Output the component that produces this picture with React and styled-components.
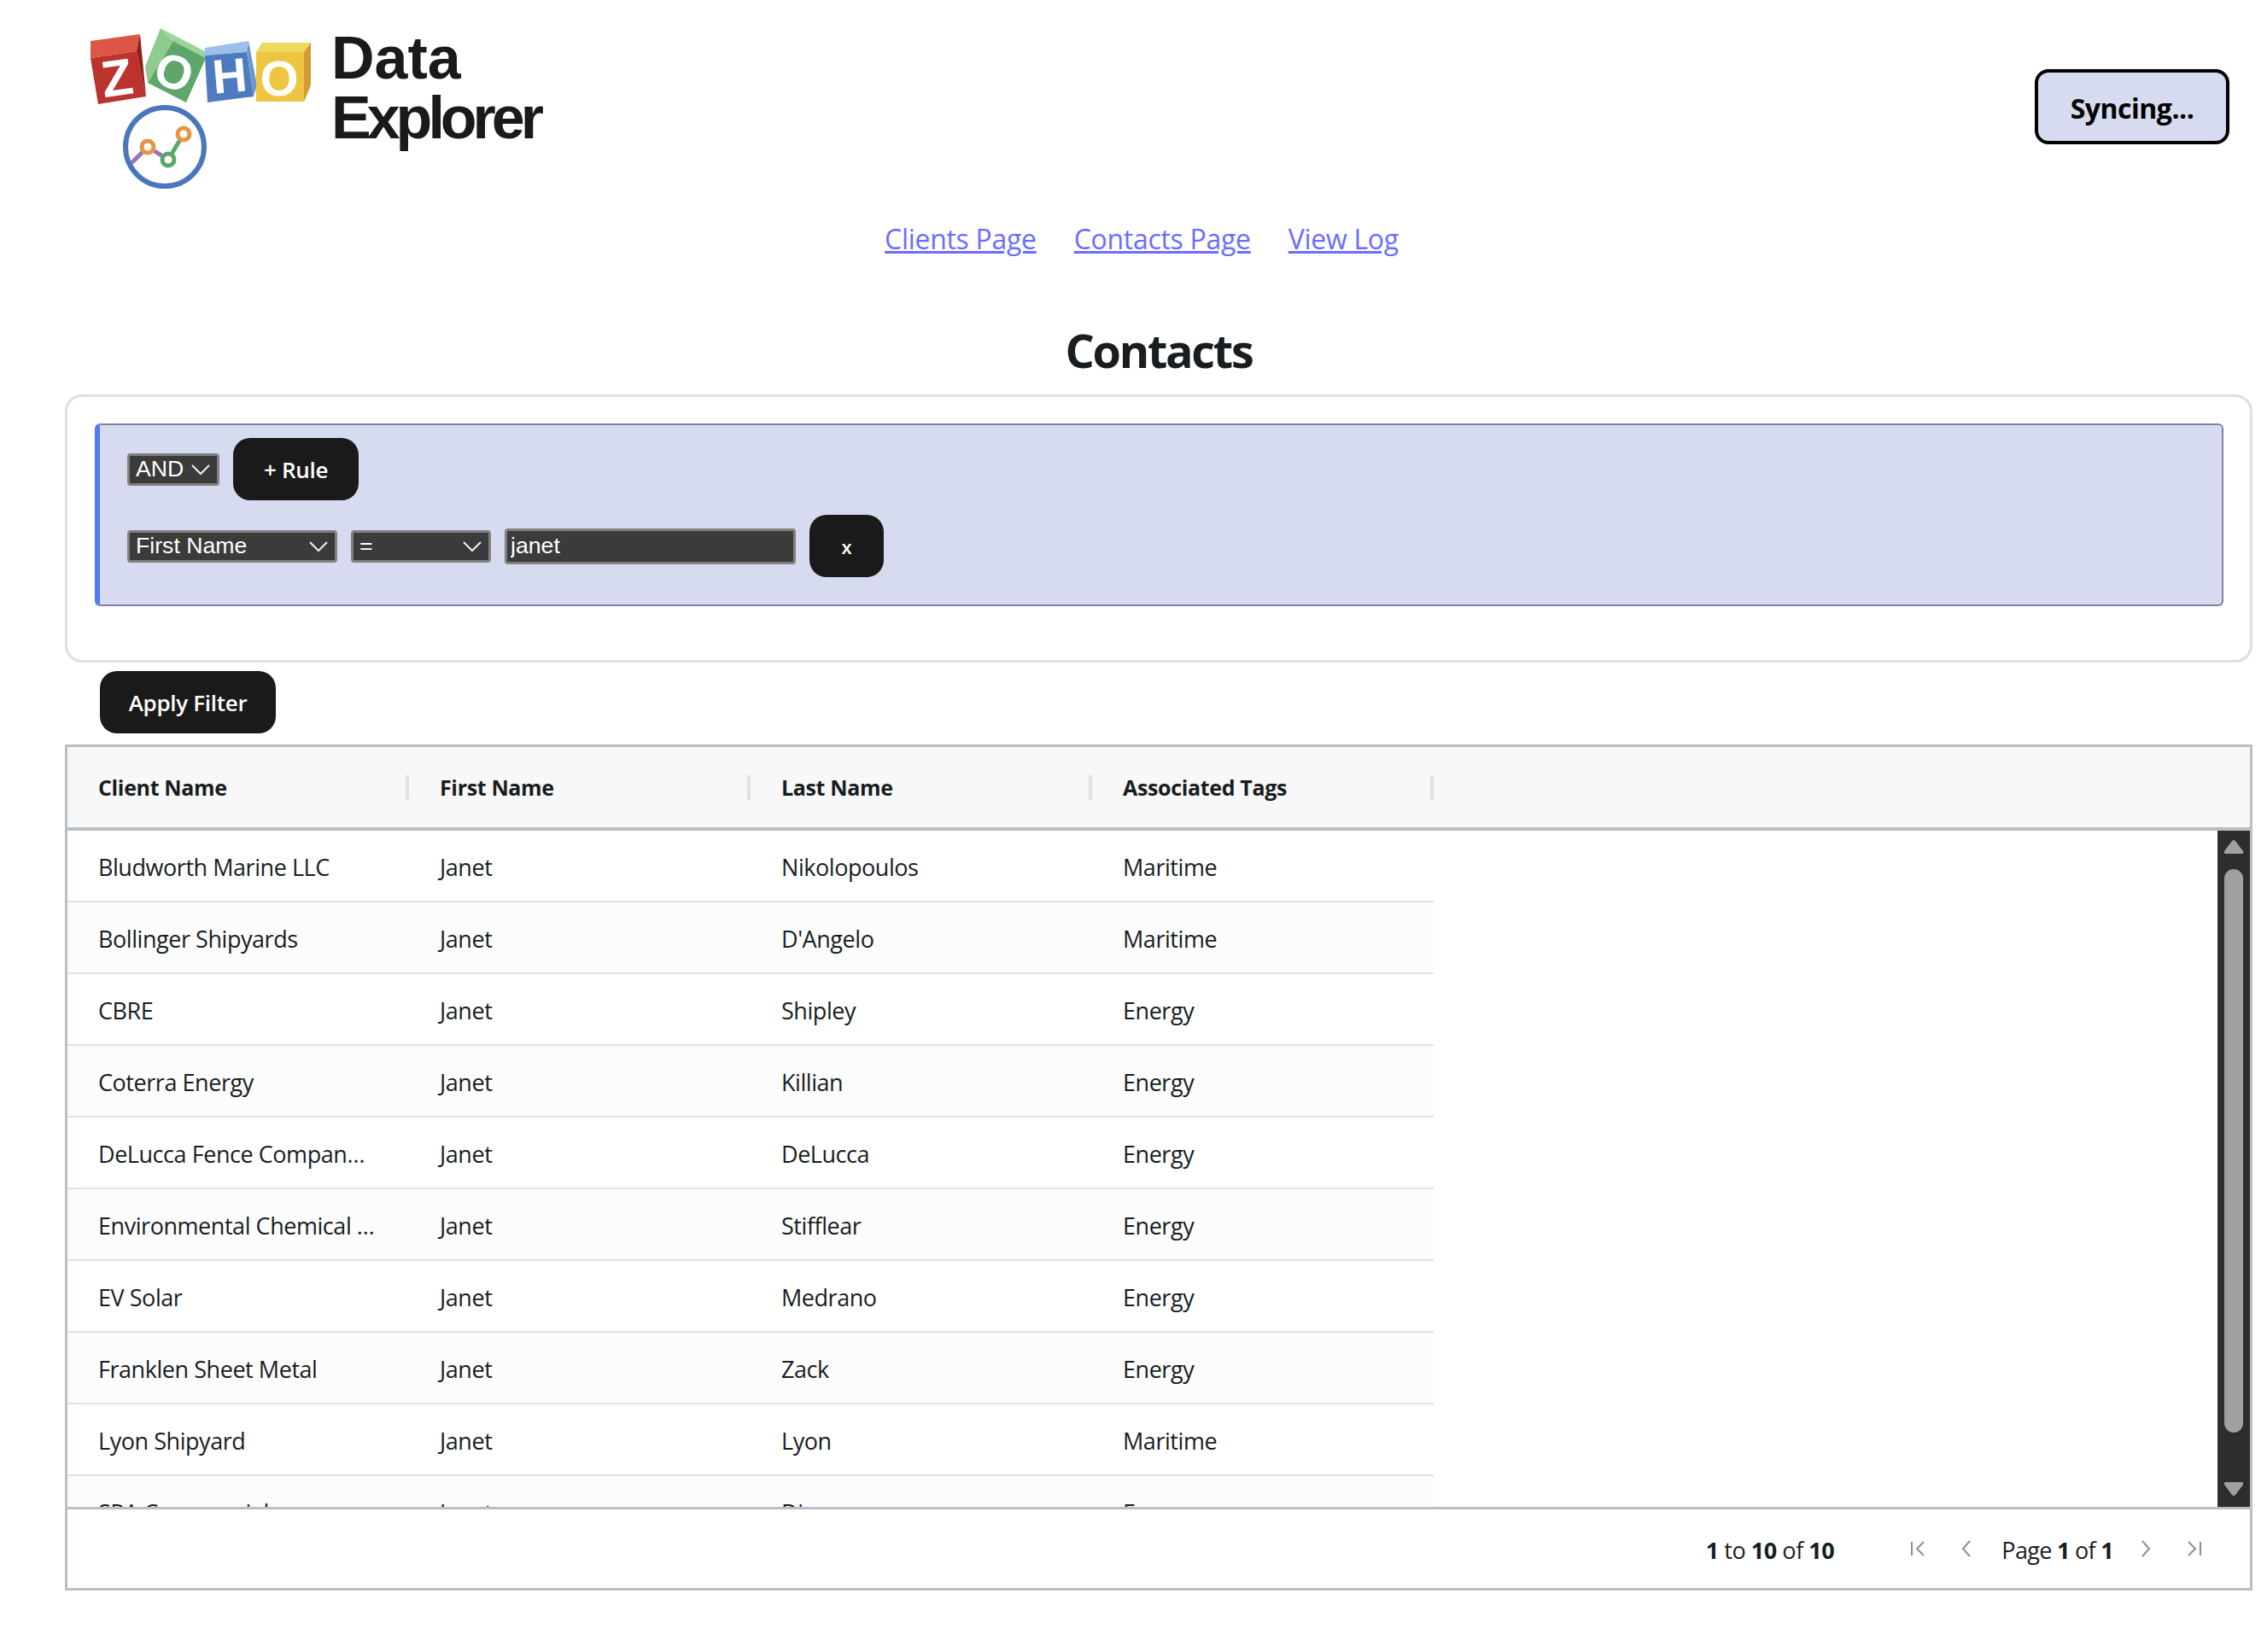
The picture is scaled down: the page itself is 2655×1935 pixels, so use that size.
import React from 'react'
import styled, { createGlobalStyle } from 'styled-components'

const GlobalStyle = createGlobalStyle`
  html, body {
    margin: 0;
    padding: 0;
    background: #fff;
  }
  body {
    font-family: "Open Sans", "Noto Sans", sans-serif;
    color: #181d1f;
  }
`

const Page = styled.div`
  width: 2655px;
  height: 1935px;
  overflow: hidden;
  box-sizing: border-box;
  padding: 0 17px 0 76px;
`

const Header = styled.header`
  height: 230px;
  display: flex;
  align-items: flex-start;
  padding: 30px 0 0 24px;
  box-sizing: border-box;
`

const LogoMark = styled.svg`
  width: 270px;
  height: 195px;
  flex: none;
`

const LogoTitle = styled.div`
  margin: 3px 0 0 18px;
  font-family: "Liberation Sans", Arial, sans-serif;
  font-weight: 700;
  font-size: 70px;
  line-height: 70px;
  color: #1a1a1a;
`

const LogoLine = styled.div`
  letter-spacing: ${p => p.$spacing || 0}px;
`

const SyncButton = styled.div`
  margin: 51px 27px 0 auto;
  width: 228px;
  height: 88px;
  box-sizing: border-box;
  border: 4px solid #000;
  border-radius: 16px;
  padding-top: 2px;
  background: #d6dbef;
  color: #000;
  font-weight: 700;
  font-size: 32px;
  letter-spacing: -0.5px;
  display: flex;
  align-items: center;
  justify-content: center;
`

const Nav = styled.nav`
  height: 103px;
  display: flex;
  justify-content: center;
  gap: 44px;
  padding: 28px 0 0 0;
  box-sizing: border-box;
  margin-left: -40px;
`

const NavLink = styled.a`
  color: #6c6cff;
  font-size: 32px;
  line-height: 44px;
  letter-spacing: -0.3px;
  text-decoration: underline;
  text-decoration-thickness: 3px;
`

const Title = styled.h2`
  margin: 0;
  height: 129px;
  text-align: center;
  font-size: 54px;
  line-height: 76px;
  font-weight: 700;
  letter-spacing: -2.3px;
  color: #1a1d1f;
  box-sizing: border-box;
  padding-top: 39px;
`

const FilterCard = styled.section`
  box-sizing: border-box;
  height: 314px;
  border: 3px solid #dfdfdf;
  border-radius: 20px;
  padding: 31px 31px 0 32px;
`

const FilterGroup = styled.div`
  box-sizing: border-box;
  height: 214px;
  background: #d6dbef;
  border: 2px solid #8181a8;
  border-left: 6px solid #4f7cf0;
  border-radius: 6px;
  padding: 15px 0 0 32px;
`

const FilterRow = styled.div`
  display: flex;
  align-items: center;
  gap: 16px;
  margin-bottom: ${p => p.$mb || 0}px;
`

const SelectWrap = styled.div`
  position: relative;
  width: ${p => p.$w}px;
  height: 38px;
  flex: none;
`

const DarkSelect = styled.select`
  appearance: none;
  box-sizing: border-box;
  display: block;
  width: 100%;
  height: 100%;
  background: #3b3b3b;
  color: #fff;
  border: 3px solid #808080;
  border-radius: 4px;
  font-family: "Liberation Sans", Arial, sans-serif;
  font-size: 26.67px;
  padding: 0 0 2px 7px;
`

const Chevron = styled.svg`
  position: absolute;
  right: 11px;
  top: 13px;
  width: 22px;
  height: 13px;
  fill: none;
  stroke: #f0f0f0;
  stroke-width: 2;
  pointer-events: none;
`

const DarkInput = styled.input`
  box-sizing: border-box;
  width: 341px;
  height: 42px;
  background: #3b3b3b;
  color: #fff;
  border: 3px solid #808080;
  border-radius: 4px;
  font-family: "Liberation Sans", Arial, sans-serif;
  font-size: 26.67px;
  padding: 0 4px;
`

const BlackButton = styled.button`
  box-sizing: border-box;
  width: ${p => p.$w}px;
  height: 73px;
  border: none;
  border-radius: 20px;
  background: #1a1a1a;
  color: #fff;
  font-family: inherit;
  font-weight: 600;
  font-size: ${p => p.$fs || 26}px;
  letter-spacing: -0.3px;
  padding: 0;
`

const ApplyWrap = styled.div`
  padding: 10px 0 13px 41px;
  display: flex;
`

const Grid = styled.section`
  box-sizing: border-box;
  height: 991px;
  border: 3px solid #babfc7;
  display: flex;
  flex-direction: column;
  font-size: 27px;
`

const GridHead = styled.div`
  height: 94px;
  flex: none;
  background: #f8f8f8;
  border-bottom: 4px solid #babfc7;
  display: flex;
`

const HeadCell = styled.div`
  box-sizing: border-box;
  width: 400px;
  flex: none;
  padding-left: 36px;
  font-size: 25px;
  font-weight: 700;
  letter-spacing: -0.35px;
  display: flex;
  align-items: center;
  position: relative;
  &::after {
    content: '';
    position: absolute;
    right: 0;
    top: 33px;
    width: 4px;
    height: 29px;
    background: #dde2eb;
  }
`

const GridBody = styled.div`
  flex: 1;
  min-height: 0;
  display: flex;
  overflow: hidden;
`

const RowsPane = styled.div`
  flex: 1;
  min-width: 0;
  overflow: hidden;
`

const Row = styled.div`
  box-sizing: border-box;
  width: 1600px;
  height: 84px;
  display: flex;
  align-items: center;
  border-bottom: 2px solid #dde2eb;
  background: ${p => (p.$odd ? '#fcfcfc' : '#fff')};
`

const Cell = styled.div`
  box-sizing: border-box;
  width: 400px;
  flex: none;
  padding: 2px 40px 0 36px;
  font-size: 27px;
  letter-spacing: -0.45px;
  white-space: nowrap;
  overflow: hidden;
  text-overflow: ellipsis;
`

const ScrollBar = styled.div`
  width: 38px;
  flex: none;
  background: #2d2d2d;
  display: flex;
  flex-direction: column;
  align-items: center;
  padding: 10px 0 12px;
  box-sizing: border-box;
`

const ScrollThumb = styled.div`
  width: 22px;
  flex: 1;
  margin: 17px 0 57px;
  background: #a0a0a0;
  border-radius: 11px;
`

const ArrowIcon = styled.svg`
  width: 24px;
  height: 18px;
  flex: none;
  fill: #a0a0a0;
`

const GridFoot = styled.div`
  height: 95px;
  flex: none;
  border-top: 3px solid #babfc7;
  display: flex;
  align-items: center;
  padding-top: 3px;
  font-size: 27px;
  letter-spacing: -0.45px;
  box-sizing: border-box;
`

const Summary = styled.div`
  margin-left: auto;
  margin-right: 71px;
  white-space: nowrap;
`

const Pager = styled.div`
  display: flex;
  align-items: center;
  margin-right: 38px;
  white-space: nowrap;
  letter-spacing: -0.7px;
`

const PagerIcon = styled.svg`
  width: 24px;
  height: 24px;
  fill: none;
  stroke: #8d8f92;
  stroke-width: 2;
  margin: 0 16px 4px;
  flex: none;
`

const PagerText = styled.span`
  margin: 0 10px 0 13px;
`

const columns = ['Client Name', 'First Name', 'Last Name', 'Associated Tags']

const rows = [
  ['Bludworth Marine LLC', 'Janet', 'Nikolopoulos', 'Maritime'],
  ['Bollinger Shipyards', 'Janet', "D'Angelo", 'Maritime'],
  ['CBRE', 'Janet', 'Shipley', 'Energy'],
  ['Coterra Energy', 'Janet', 'Killian', 'Energy'],
  ['DeLucca Fence Company of Texas', 'Janet', 'DeLucca', 'Energy'],
  ['Environmental Chemical Corporation', 'Janet', 'Stifflear', 'Energy'],
  ['EV Solar', 'Janet', 'Medrano', 'Energy'],
  ['Franklen Sheet Metal', 'Janet', 'Zack', 'Energy'],
  ['Lyon Shipyard', 'Janet', 'Lyon', 'Maritime'],
  ['SPA Commercial', 'Janet', 'Diaz', 'Energy']
]

const Logo = () => (
  <LogoMark viewBox="100 30 270 195">
    <polygon points="106,48 164,40 160,60 106,68" fill="#dd5545" />
    <polygon points="106,68 160,60 171,113 115,122" fill="#bc322c" />
    <polygon points="164,40 171,113 160,60" fill="#8e1f1a" />
    <text x="137" y="112" transform="rotate(-8 137 91)" textAnchor="middle" fontFamily="Liberation Sans" fontWeight="700" fontSize="60" fill="#fff">Z</text>

    <polygon points="188,33 240,60 241,68 203,48" fill="#9bd59b" />
    <polygon points="188,33 203,48 173,97 170,78" fill="#8fca8f" />
    <polygon points="203,48 241,68 218,120 173,97" fill="#5ea66a" />
    <text x="204" y="104" transform="rotate(20 204 84)" textAnchor="middle" fontFamily="Liberation Sans" fontWeight="700" fontSize="56" fill="#fff">O</text>

    <polygon points="240,56 291,48 289,61 240,65" fill="#9cc0ea" />
    <polygon points="240,65 289,61 297,113 243,120" fill="#4e7bc0" />
    <polygon points="291,48 301,100 297,113 289,61" fill="#6c97cf" />
    <text x="269" y="108" transform="rotate(-5 269 88)" textAnchor="middle" fontFamily="Liberation Sans" fontWeight="700" fontSize="56" fill="#fff">H</text>

    <polygon points="307,50 364,50 356,61 300,61" fill="#f0d85e" />
    <polygon points="300,61 356,61 356,119 300,119" fill="#eec540" />
    <polygon points="364,50 364,100 356,119 356,61" fill="#cf9c35" />
    <text x="327" y="112" textAnchor="middle" fontFamily="Liberation Sans" fontWeight="700" fontSize="58" fill="#fff">O</text>

    <circle cx="193" cy="172" r="46" fill="none" stroke="#4a76bd" strokeWidth="6" />
    <polyline points="154,191 173,172 197,187" fill="none" stroke="#9a73b8" strokeWidth="5" />
    <line x1="197" y1="187" x2="215" y2="157" stroke="#5aa868" strokeWidth="5" />
    <circle cx="173" cy="172" r="7" fill="#fff" stroke="#e69545" strokeWidth="5" />
    <circle cx="197" cy="187" r="7" fill="#fff" stroke="#5aa868" strokeWidth="5" />
    <circle cx="215" cy="157" r="7" fill="#fff" stroke="#e69545" strokeWidth="5" />
  </LogoMark>
)

const Select = ({ width, value, options }) => (
  <SelectWrap $w={width}>
    <DarkSelect defaultValue={value}>
      {options.map(o => <option key={o}>{o}</option>)}
    </DarkSelect>
    <Chevron viewBox="0 0 22 13"><path d="M1 1l10 10L21 1" /></Chevron>
  </SelectWrap>
)

export default function App() {
  return (
    <Page>
      <GlobalStyle />
      <Header>
        <Logo />
        <LogoTitle>
          <LogoLine>Data</LogoLine>
          <LogoLine $spacing={-5}>Explorer</LogoLine>
        </LogoTitle>
        <SyncButton>Syncing...</SyncButton>
      </Header>

      <Nav>
        <NavLink href="#clients">Clients Page</NavLink>
        <NavLink href="#contacts">Contacts Page</NavLink>
        <NavLink href="#log">View Log</NavLink>
      </Nav>

      <Title>Contacts</Title>

      <FilterCard>
        <FilterGroup>
          <FilterRow $mb={17}>
            <Select width={108} value="AND" options={['AND', 'OR']} />
            <BlackButton $w={147}>+ Rule</BlackButton>
          </FilterRow>
          <FilterRow>
            <Select width={246} value="First Name" options={['First Name']} />
            <Select width={164} value="=" options={['=']} />
            <DarkInput defaultValue="janet" />
            <BlackButton $w={87} $fs={22}>x</BlackButton>
          </FilterRow>
        </FilterGroup>
      </FilterCard>

      <ApplyWrap>
        <BlackButton $w={206}>Apply Filter</BlackButton>
      </ApplyWrap>

      <Grid>
        <GridHead>
          {columns.map(c => <HeadCell key={c}>{c}</HeadCell>)}
        </GridHead>
        <GridBody>
          <RowsPane>
            {rows.map((r, i) => (
              <Row key={r[0]} $odd={i % 2 === 1}>
                {r.map((v, j) => <Cell key={j}>{v}</Cell>)}
              </Row>
            ))}
          </RowsPane>
          <ScrollBar>
            <ArrowIcon viewBox="0 0 24 18"><path d="M10 2 Q12 0 14 2 L23 14 Q24 17 21 17 L3 17 Q0 17 1 14 Z" /></ArrowIcon>
            <ScrollThumb />
            <ArrowIcon viewBox="0 0 24 18"><path d="M10 16 Q12 18 14 16 L23 4 Q24 1 21 1 L3 1 Q0 1 1 4 Z" /></ArrowIcon>
          </ScrollBar>
        </GridBody>
        <GridFoot>
          <Summary><b>1</b> to <b>10</b> of <b>10</b></Summary>
          <Pager>
            <PagerIcon viewBox="0 0 24 24"><path d="M4 4v16M18 4l-8 8 8 8" /></PagerIcon>
            <PagerIcon viewBox="0 0 24 24"><path d="M16 3l-8 9 8 9" /></PagerIcon>
            <PagerText>Page <b>1</b> of <b>1</b></PagerText>
            <PagerIcon viewBox="0 0 24 24"><path d="M8 3l8 9-8 9" /></PagerIcon>
            <PagerIcon viewBox="0 0 24 24"><path d="M20 4v16M6 4l8 8-8 8" /></PagerIcon>
          </Pager>
        </GridFoot>
      </Grid>
    </Page>
  )
}
